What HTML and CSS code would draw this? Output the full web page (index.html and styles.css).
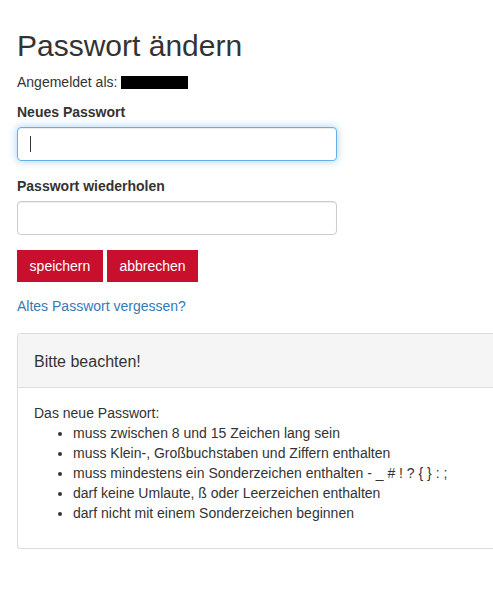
FILE: index.html
```html
<!DOCTYPE html>
<html lang="de">
<head>
<meta charset="utf-8">
<title>Passwort ändern</title>
<link rel="stylesheet" href="styles.css">
</head>
<body>
<div class="page">
  <h1 class="title">Passwort ändern</h1>
  <p class="login-info">Angemeldet als: <span class="redacted"></span></p>
  <form class="pw-form">
    <div class="form-group">
      <label class="form-label" for="pw1">Neues Passwort</label>
      <div class="field-wrap">
        <input class="form-control is-focused" id="pw1" type="password">
        <span class="caret"></span>
      </div>
    </div>
    <div class="form-group">
      <label class="form-label" for="pw2">Passwort wiederholen</label>
      <input class="form-control" id="pw2" type="password">
    </div>
    <div class="btn-row">
      <button type="button" class="btn">speichern</button>
      <button type="button" class="btn">abbrechen</button>
    </div>
  </form>
  <p class="forgot"><a class="link" href="#">Altes Passwort vergessen?</a></p>
  <div class="panel">
    <div class="panel-heading">Bitte beachten!</div>
    <div class="panel-body">
      <p class="rules-intro">Das neue Passwort:</p>
      <ul class="rules">
        <li>muss zwischen 8 und 15 Zeichen lang sein</li>
        <li>muss Klein-, Großbuchstaben und Ziffern enthalten</li>
        <li>muss mindestens ein Sonderzeichen enthalten - _ # ! ? { } : ;</li>
        <li>darf keine Umlaute, ß oder Leerzeichen enthalten</li>
        <li>darf nicht mit einem Sonderzeichen beginnen</li>
      </ul>
    </div>
  </div>
</div>
</body>
</html>
```
FILE: styles.css
```css
html, body {
  margin: 0;
  padding: 0;
  background: #fff;
}
body {
  font-family: "Liberation Sans", Arial, Helvetica, sans-serif;
  font-size: 14px;
  line-height: 20px;
  color: #333;
}
.page {
  padding: 29px 0 0 17px;
}
.title {
  margin: 0 0 10px;
  font-size: 30px;
  line-height: 33px;
  font-weight: 400;
  color: #333;
}
.login-info {
  margin: 0 0 10px;
}
.redacted {
  display: inline-block;
  width: 67px;
  height: 13px;
  background: #000;
  vertical-align: -2px;
}
.pw-form {
  margin: 0;
}
.form-group {
  margin-bottom: 15px;
}
.form-label {
  display: block;
  font-weight: 700;
  margin-bottom: 5px;
}
.field-wrap {
  position: relative;
  width: 320px;
}
.form-control {
  display: block;
  box-sizing: border-box;
  width: 320px;
  height: 34px;
  padding: 6px 12px;
  border: 1px solid #ccc;
  border-radius: 4px;
  background: #fff;
  font: inherit;
  color: #555;
  box-shadow: inset 0 1px 1px rgba(0,0,0,.075);
  outline: none;
  caret-color: transparent;
}
.form-control.is-focused {
  border-color: #66afe9;
  box-shadow: inset 0 1px 1px rgba(0,0,0,.075), 0 0 8px rgba(102,175,233,.6);
}
.caret {
  position: absolute;
  left: 13px;
  top: 9px;
  width: 1px;
  height: 16px;
  background: #333;
}
.btn-row {
  display: flex;
  gap: 4px;
}
.btn {
  border: 0;
  border-radius: 0;
  padding: 6px 12.6px;
  background: #c8102e;
  color: #fff;
  font: inherit;
  line-height: 20px;
  cursor: pointer;
}
.forgot {
  margin: 14px 0 17px;
}
.link {
  color: #337ab7;
  text-decoration: none;
}
.panel {
  border: 1px solid #ddd;
  border-right: 0;
  border-radius: 4px 0 0 4px;
  background: #fff;
  box-shadow: 0 1px 1px rgba(0,0,0,.05);
}
.panel-heading {
  padding: 17px 16px 14px;
  font-size: 16px;
  line-height: 22px;
  background: #f5f5f5;
  border-bottom: 1px solid #ddd;
  border-radius: 3px 0 0 0;
  color: #333;
}
.panel-body {
  padding: 15px 16px;
}
.rules-intro {
  margin: 0;
}
.rules {
  margin: 0 0 10px;
  padding-left: 39px;
}
```
